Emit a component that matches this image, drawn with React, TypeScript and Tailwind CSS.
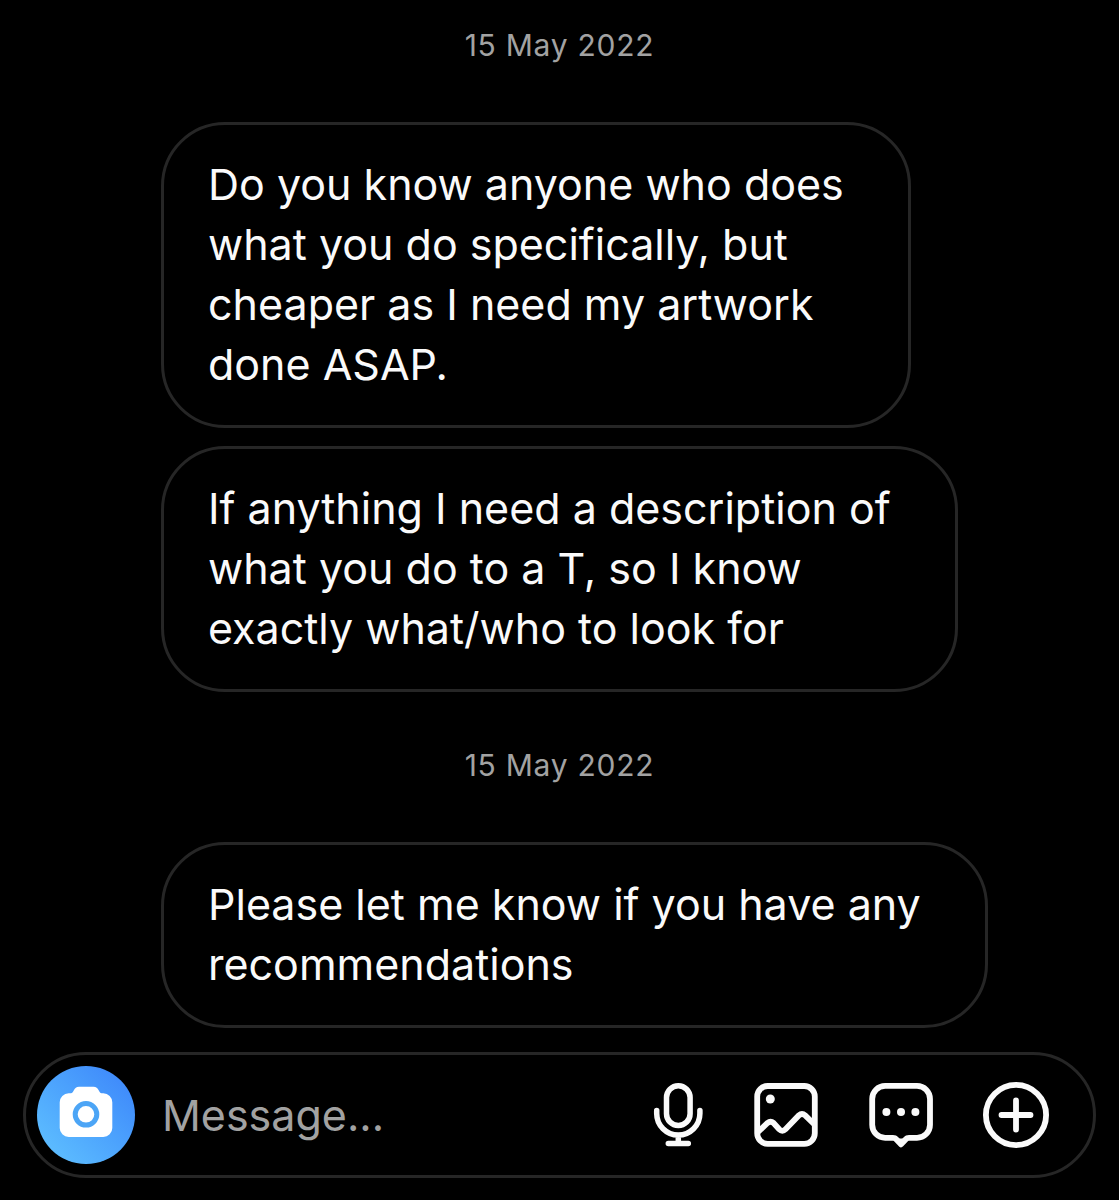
import type { ReactNode } from "react";

const DateLabel = ({ children }: { children: ReactNode }) => (
  <p className="pt-[54px] pb-[58px] text-center text-[30px] leading-[38px] tracking-wide text-[#a2a2a2]">
    {children}
  </p>
);

const Bubble = ({ lines }: { lines: string[] }) => (
  <div className="w-fit rounded-[64px] border-[3px] border-[#262626] pt-[29px] pr-16 pb-[31px] pl-11">
    <p className="text-[43px] leading-[60px] text-[#fafafa]">
      {lines.map((line) => (
        <span key={line} className="block">
          {line}
        </span>
      ))}
    </p>
  </div>
);

const CameraIcon = () => (
  <svg viewBox="0 0 98 98" className="size-full" aria-hidden="true">
    <path
      fill="#fff"
      d="M34 27.3C36.8 27 36.6 20.7 42 20.7H56.5C62 20.7 61.8 27 64.6 27.3H66.3A9 9 0 0 1 75.3 36.3V62A9 9 0 0 1 66.3 71H31.7A9 9 0 0 1 22.7 62V36.3A9 9 0 0 1 31.7 27.3Z"
    />
    <circle cx="49" cy="48.3" r="10.8" fill="none" stroke="#4ca5f6" strokeWidth="5" />
  </svg>
);

const MicIcon = () => (
  <svg
    width="52"
    height="66"
    viewBox="0 0 52 66"
    fill="none"
    stroke="currentColor"
    strokeWidth="5.5"
    strokeLinecap="round"
    aria-hidden="true"
  >
    <rect x="14.5" y="3.8" width="23.6" height="39.7" rx="11.8" />
    <path d="M4.7 28.5V31.5A21.6 21.6 0 0 0 47.9 31.5V28.5M26.3 53.5V61.5M16.3 61.5H36.3" />
  </svg>
);

const ImageIcon = () => (
  <svg
    width="66"
    height="66"
    viewBox="0 0 66 66"
    fill="none"
    stroke="currentColor"
    strokeWidth="5.8"
    aria-hidden="true"
  >
    <rect x="4.2" y="4" width="57.6" height="57.8" rx="10.5" />
    <circle cx="17.3" cy="17" r="4.5" fill="currentColor" stroke="none" />
    <path d="M4.5 50.5L14.5 41Q17.6 38.4 20.6 41L26.2 47.2Q29.3 50.4 32.5 47.2L45.8 33.4Q49 30.6 52.2 33.4L61.5 42.5" />
  </svg>
);

const ChatIcon = () => (
  <svg
    width="66"
    height="66"
    viewBox="0 0 66 66"
    fill="none"
    stroke="currentColor"
    strokeWidth="5.8"
    strokeLinejoin="round"
    aria-hidden="true"
  >
    <path d="M17.2 3.9H49A13 13 0 0 1 62 16.9V42.8A13 13 0 0 1 49 55.8H41Q39 55.8 37.8 57.2L33 62.4L28.2 57.2Q27 55.8 25 55.8H17.2A13 13 0 0 1 4.2 42.8V16.9A13 13 0 0 1 17.2 3.9Z" />
    {/* fills the gap inside the tail */}
    <path d="M29 56.5H37L33 61Z" fill="currentColor" stroke="none" />
    <g fill="currentColor" stroke="none">
      <circle cx="18.4" cy="30" r="4" />
      <circle cx="33" cy="30" r="4" />
      <circle cx="47.4" cy="30" r="4" />
    </g>
  </svg>
);

const PlusIcon = () => (
  <svg
    width="66"
    height="66"
    viewBox="0 0 66 66"
    fill="none"
    stroke="currentColor"
    strokeWidth="5.8"
    strokeLinecap="round"
    aria-hidden="true"
  >
    <circle cx="33" cy="33" r="30.1" />
    <path d="M18.5 33H47.5M33 18.5V47.5" />
  </svg>
);

const actions = [
  { label: "Record voice message", icon: <MicIcon /> },
  { label: "Send image", icon: <ImageIcon /> },
  { label: "Quick replies", icon: <ChatIcon /> },
  { label: "More options", icon: <PlusIcon /> },
];

const MessageBar = () => (
  <form
    className="mx-[23px] mt-6 mb-[22px] flex items-center rounded-full border-[3px] border-[#262626] py-[11px] pr-11 pl-[11px]"
    onSubmit={(e) => e.preventDefault()}
  >
    <button
      type="button"
      aria-label="Open camera"
      className="size-[98px] shrink-0 rounded-full bg-linear-to-tr from-[#62c4ff] to-[#3c82fa]"
    >
      <CameraIcon />
    </button>
    <input
      type="text"
      aria-label="Message"
      placeholder="Message..."
      className="ml-[27px] min-w-0 flex-1 bg-transparent text-[43px] leading-[60px] text-[#fafafa] outline-none placeholder:text-[#a2a2a2]"
    />
    <div className="flex shrink-0 items-center gap-[49px] text-[#fafafa]">
      {actions.map(({ label, icon }) => (
        <button key={label} type="button" aria-label={label}>
          {icon}
        </button>
      ))}
    </div>
  </form>
);

const App = () => {
  return (
    <div className="flex min-h-screen flex-col bg-black font-['Inter',sans-serif]">
      <main className="-mt-7 flex-1">
        <DateLabel>15 May 2022</DateLabel>
        <div className="flex flex-col gap-[18px] pl-[161px]">
          <Bubble
            lines={[
              "Do you know anyone who does",
              "what you do specifically, but",
              "cheaper as I need my artwork",
              "done ASAP.",
            ]}
          />
          <Bubble
            lines={[
              "If anything I need a description of",
              "what you do to a T, so I know",
              "exactly what/who to look for",
            ]}
          />
        </div>
        <DateLabel>15 May 2022</DateLabel>
        <div className="pl-[161px]">
          <Bubble lines={["Please let me know if you have any", "recommendations"]} />
        </div>
      </main>
      <MessageBar />
    </div>
  );
};

export default App;
